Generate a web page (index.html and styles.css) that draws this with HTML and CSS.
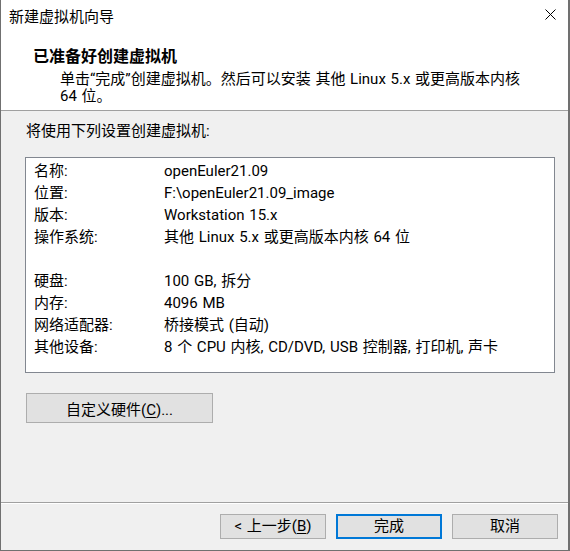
FILE: index.html
```html
<!DOCTYPE html>
<html lang="zh-CN">
<head>
<meta charset="utf-8">
<title>新建虚拟机向导</title>
<link rel="stylesheet" href="styles.css">
</head>
<body>
<div class="window">
  <div class="top">
    <div class="titlebar">
      <span class="title">新建虚拟机向导</span>
      <span class="close">
        <svg width="11" height="11" viewBox="0 0 11 11"><path d="M0.5 0.5 L10.5 10.5 M10.5 0.5 L0.5 10.5" stroke="#000" stroke-width="1" fill="none"/></svg>
      </span>
    </div>
    <div class="header">
      <div class="heading">已准备好创建虚拟机</div>
      <div class="subtitle">单击“完成”创建虚拟机。然后可以安装 其他 Linux 5.x 或更高版本内核<br>64 位。</div>
    </div>
  </div>
  <div class="body">
    <div class="intro">将使用下列设置创建虚拟机:</div>
    <div class="summary">
      <div class="row"><span class="key">名称:</span><span class="val">openEuler21.09</span></div>
      <div class="row"><span class="key">位置:</span><span class="val">F:\openEuler21.09_image</span></div>
      <div class="row"><span class="key">版本:</span><span class="val">Workstation 15.x</span></div>
      <div class="row"><span class="key">操作系统:</span><span class="val">其他 Linux 5.x 或更高版本内核 64 位</span></div>
      <div class="row"></div>
      <div class="row"><span class="key">硬盘:</span><span class="val">100 GB, 拆分</span></div>
      <div class="row"><span class="key">内存:</span><span class="val">4096 MB</span></div>
      <div class="row"><span class="key">网络适配器:</span><span class="val">桥接模式 (自动)</span></div>
      <div class="row"><span class="key">其他设备:</span><span class="val">8 个 CPU 内核, CD/DVD, USB 控制器, 打印机, 声卡</span></div>
    </div>
    <button class="btn custom">自定义硬件(<u>C</u>)...</button>
  </div>
  <div class="footer">
    <button class="btn nav">&lt; 上一步(<u>B</u>)</button>
    <button class="btn nav primary">完成</button>
    <button class="btn nav">取消</button>
  </div>
</div>
</body>
</html>
```
FILE: styles.css
```css
html, body {
  margin: 0;
  padding: 0;
  background: #f0f0f0;
}
body {
  font-family: Roboto, "Noto Sans CJK SC", sans-serif;
  font-size: 15px;
  color: #000;
  word-spacing: 1px;
}
.window {
  width: 570px;
  height: 551px;
  box-sizing: border-box;
  border-left: 1px solid #707070;
  border-right: 2px solid #707070;
  border-bottom: 1px solid #707070;
  display: flex;
  flex-direction: column;
  background: #f0f0f0;
}
.top {
  background: #fff;
  height: 110px;
  border-bottom: 1px solid #a0a0a0;
}
.titlebar {
  height: 32px;
  display: flex;
  align-items: center;
  justify-content: space-between;
  padding: 2px 0 0 8px;
  box-sizing: border-box;
}
.title {
  line-height: 20px;
}
.close {
  width: 11px;
  height: 11px;
  margin-right: 12px;
  margin-top: -6px;
  display: flex;
}
.header {
  padding: 15px 0 0 32px;
}
.heading {
  font-weight: bold;
  font-size: 16px;
  line-height: 20px;
  height: 20px;
}
.subtitle {
  padding-left: 27px;
  line-height: 17px;
  margin-top: 4px;
}
.body {
  flex: 1;
  padding: 10px 0 0 24px;
  display: flex;
  flex-direction: column;
  border-bottom: 1px solid #a0a0a0;
}
.intro {
  line-height: 20px;
  padding-left: 1px;
}
.summary {
  margin-top: 16px;
  width: 530px;
  height: 216px;
  box-sizing: border-box;
  border: 1px solid #828790;
  background: #fff;
  padding: 2px 0 0 8px;
}
.row {
  height: 22px;
  line-height: 22px;
  display: flex;
}
.key {
  width: 130px;
  flex: none;
}
.btn {
  font-family: Roboto, "Noto Sans CJK SC", sans-serif;
  font-size: 15px;
  word-spacing: 1px;
  color: #000;
  background: #e1e1e1;
  border: 1px solid #adadad;
  box-sizing: border-box;
  padding: 0;
  margin: 0;
}
.btn u {
  text-decoration-thickness: 1px;
  text-underline-offset: 2px;
}
.custom {
  margin-top: 20px;
  margin-left: 1px;
  width: 187px;
  height: 30px;
}
.footer {
  border-top: 1px solid #fff;
  height: 36px;
  padding: 10px 10px 0 0;
  display: flex;
  justify-content: flex-end;
  gap: 10px;
}
.nav {
  width: 106px;
  height: 25px;
  line-height: 21px;
}
.primary {
  border: 2px solid #0078d7;
}
```
